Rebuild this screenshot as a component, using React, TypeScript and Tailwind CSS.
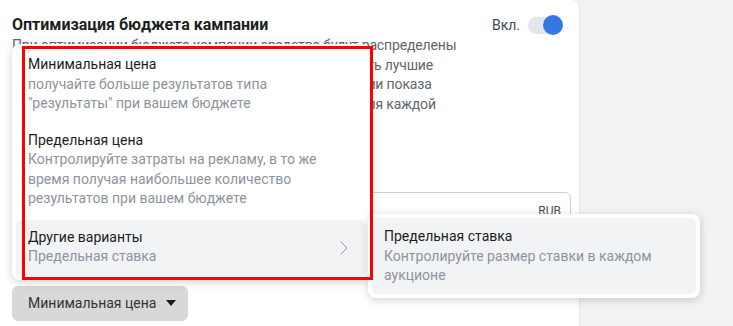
import { ChevronRight } from "lucide-react";

const font = { fontFamily: "Roboto, 'Liberation Sans', Arial, sans-serif" };

export default function App() {
    return (
        <div className="w-[733px] h-[326px] overflow-hidden bg-[#f2f2f2] flex" style={font}>
            <div className="relative w-[580px] h-full bg-white rounded-tr-lg border-r border-[#e5e5e5] flex flex-col px-3 pt-[15px]">
                {/* header */}
                <div className="flex items-center justify-between h-5">
                    <h2 className="text-[16px] font-bold text-[#1c1e21] leading-5">Оптимизация бюджета кампании</h2>
                    <div className="flex items-center gap-2 mr-[5px]">
                        <span className="text-[14px] text-[#444950]">Вкл.</span>
                        <div className="relative w-[34px] h-[17px] rounded-full bg-[#e4e6eb]">
                            <div className="absolute -right-[1px] -top-[2px] w-5 h-5 rounded-full bg-[#3578e5]" />
                        </div>
                    </div>
                </div>

                <p className="mt-[1px] text-[14px] leading-[19.5px] text-[#606770] tracking-[-0.15px]">
                    При оптимизации бюджета кампании средства будут распределены<br />
                    между группами объявлений постоянно, чтобы получить лучшие<br />
                    результаты с учетом выбранной вами цели оптимизации показа<br />
                    и стратегии ставок. Вы также можете указать ставки для каждой<br />
                    группы объявлений.
                </p>

                {/* budget input */}
                <div className="mt-[58px] w-[559px] h-9 border border-[#ccd0d5] rounded-md flex items-start justify-end pr-[9px] pt-[11px]">
                    <span className="text-[12px] leading-[14px] text-[#4b4f56]">RUB</span>
                </div>

                <button className="mt-[58px] w-[176px] h-[35px] rounded-md bg-[#d8d8d8] flex items-center pl-4 gap-[10px] text-[14px] text-[#333]">
                    Минимальная цена
                    <svg width="10" height="6" viewBox="0 0 10 6"><path d="M0 0h10L5 6z" fill="#1c1e21" /></svg>
                </button>

                {/* dropdown menu */}
                <div className="absolute left-3 top-[44px] w-[358px] bg-white rounded-lg shadow-[0_2px_10px_rgba(0,0,0,0.18)] p-1 text-[14px] leading-[19.5px]">
                    <div className="px-3 pt-[7px] pb-[10px]">
                        <div className="text-[#1c1e21]">Минимальная цена</div>
                        <div className="text-[#8d949e]">получайте больше результатов типа<br />"результаты" при вашем бюджете</div>
                    </div>
                    <div className="px-3 pt-[7px] pb-[11px]">
                        <div className="text-[#1c1e21]">Предельная цена</div>
                        <div className="text-[#8d949e]">Контролируйте затраты на рекламу, в то же<br />время получая наибольшее количество<br />результатов при вашем бюджете</div>
                    </div>
                    <div className="px-3 pt-[8px] pb-[9px] bg-[#f2f3f5] rounded-md flex items-center justify-between">
                        <div>
                            <div className="text-[#1c1e21]">Другие варианты</div>
                            <div className="text-[#8d949e]">Предельная ставка</div>
                        </div>
                        <ChevronRight className="w-6 h-6 text-[#8d949e] -mr-[2px] mt-[2px]" strokeWidth={1} />
                    </div>
                </div>

                {/* submenu */}
                <div className="absolute left-[368px] top-[214px] w-[332px] bg-white rounded-lg shadow-[0_2px_10px_rgba(0,0,0,0.18)] p-1 text-[14px] leading-[19.5px]">
                    <div className="bg-[#f2f3f5] rounded-md px-3 pt-[9px] pb-[8px]">
                        <div className="text-[#1c1e21]">Предельная ставка</div>
                        <div className="text-[#8d949e]">Контролируйте размер ставки в каждом<br />аукционе</div>
                    </div>
                </div>

                {/* annotation */}
                <div className="absolute left-[22px] top-[46px] w-[351px] h-[234px] border-[3px] border-[#ff0000] pointer-events-none" />
            </div>
        </div>
    );
}
